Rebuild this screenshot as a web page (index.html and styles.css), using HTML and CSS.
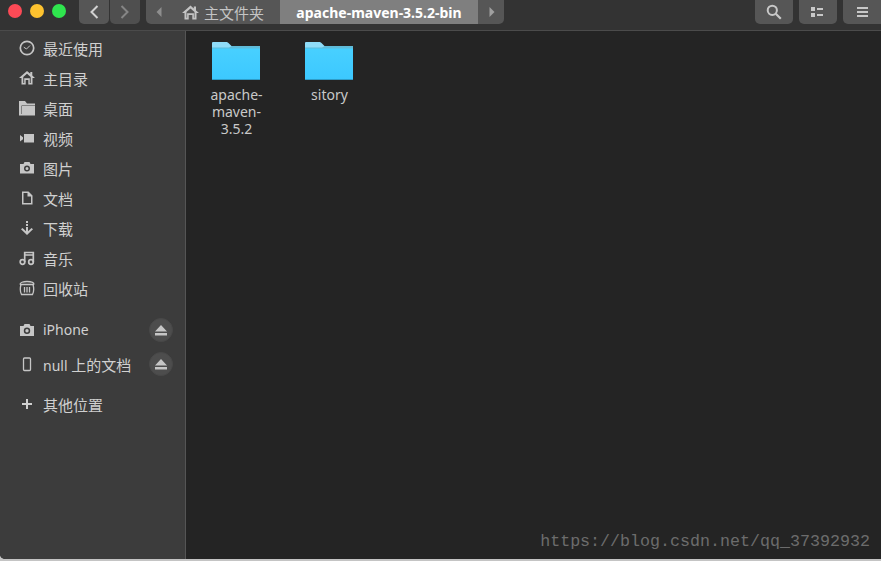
FILE: index.html
```html
<!DOCTYPE html>
<html lang="zh">
<head>
<meta charset="utf-8">
<title>apache-maven-3.5.2-bin</title>
<link rel="stylesheet" href="styles.css">
</head>
<body>
<div class="window">
  <header class="titlebar">
    <div class="lights">
      <span class="light red"></span>
      <span class="light yellow"></span>
      <span class="light green"></span>
    </div>
    <div class="nav">
      <button class="btn back"><svg width="12" height="16" viewBox="0 0 12 16"><path d="M9.500 2 3.500 8l6 6" fill="none" stroke="#d2d2d2" stroke-width="2"/></svg></button>
      <button class="btn forward"><svg width="12" height="16" viewBox="0 0 12 16"><path d="M2.500 2l6 6-6 6" fill="none" stroke="#858585" stroke-width="2"/></svg></button>
    </div>
    <div class="pathbar">
      <div class="crumb-arrow left"><svg width="6" height="10" viewBox="0 0 6 10"><path d="M5.500 0v10L.5 5z" fill="#8e8e8e"/></svg></div>
      <div class="crumb home">
        <svg width="17" height="15" viewBox="0 0 17 15"><path fill-rule="evenodd" d="M8.500.5 0 8h2.500v6.500h4.200V10h3.600v4.500h4.200V8H17L14 5.400V1.500h-2.200v2zM8.500 3.400l4 3.600v5.700h-.6V8.300H5.100v4.400h-.6V7z" fill="#c4c4c4"/></svg>
        <span>主文件夹</span>
      </div>
      <div class="crumb active">apache-maven-3.5.2-bin</div>
      <div class="crumb-arrow right"><svg width="6" height="10" viewBox="0 0 6 10"><path d="M.5 0v10l5-5z" fill="#a0a0a0"/></svg></div>
    </div>
    <div class="tools">
      <button class="btn tool"><svg width="16" height="16" viewBox="0 0 16 16"><circle cx="6.300" cy="6.300" r="4.600" fill="none" stroke="#c8c8c8" stroke-width="2"/><path d="m9.800 9.800 5 5" stroke="#c8c8c8" stroke-width="2.200" fill="none"/></svg></button>
      <button class="btn tool"><svg width="14" height="10" viewBox="0 0 14 10"><path d="M0 0h4v4H0zM0 6h4v4H0zM6 1h6v2H6zM6 7h6v2H6z" fill="#c8c8c8"/></svg></button>
      <button class="btn tool last"><svg width="11" height="10" viewBox="0 0 11 10"><path d="M0 0h11v2H0zM0 4h11v2H0zM0 8h11v2H0z" fill="#c8c8c8"/></svg></button>
    </div>
  </header>
  <div class="body">
    <nav class="sidebar">
      <div class="row"><svg class="icon" width="16" height="16" viewBox="0 0 16 16"><circle cx="8" cy="8" r="6.700" fill="none" stroke="#c6c6c6" stroke-width="1.700"/><path d="M4.800 7.200 7.500 9 11 5.500" fill="none" stroke="#c6c6c6"/></svg><span>最近使用</span></div>
      <div class="row"><svg class="icon" width="16" height="16" viewBox="0 0 16 16"><path fill-rule="evenodd" d="M8 1 0 8h2.500v6.500h4.200V10h2.600v4.500h4.200V8H16l-2.700-2.400V2h-2v1.800zM8 3.800l3.700 3.300v5.800h-.9V8.300H5.200v4.600h-.9V7.100z" fill="#c6c6c6"/></svg><span>主目录</span></div>
      <div class="row"><svg class="icon" width="16" height="16" viewBox="0 0 16 16"><path d="M0 1h6l2 2.500h8V15.500H0zM2.500 5.500v8.500H3V6h13V5.500z" fill="#c6c6c6"/></svg><span>桌面</span></div>
      <div class="row"><svg class="icon" width="16" height="16" viewBox="0 0 16 16"><path d="M5 4h10v8.500H5zM1 5l3 2.200v2.100L1 11.500z" fill="#c6c6c6"/></svg><span>视频</span></div>
      <div class="row"><svg class="icon" width="16" height="16" viewBox="0 0 16 16"><path fill-rule="evenodd" d="M1 4h3.500l1-2h5l1 2H15v9.500H1zM8 5.500a3 3 0 1 0 0 6 3 3 0 0 0 0-6zM8 7a1.500 1.500 0 1 1 0 3 1.500 1.500 0 0 1 0-3z" fill="#c6c6c6"/></svg><span>图片</span></div>
      <div class="row"><svg class="icon" width="16" height="16" viewBox="0 0 16 16"><path d="M3 1.500h6.500l4 4V14.500H3zM4.500 3v10h7.500V6.500H8.500V3z" fill="#c6c6c6"/></svg><span>文档</span></div>
      <div class="row"><svg class="icon" width="16" height="16" viewBox="0 0 16 16"><path d="M7 1h2v2H7zM7 4h2v2H7zM7 7h2v4.200l3.500-3.200L14 9.300 8 15 2 9.300 3.500 8 7 11.200z" fill="#c6c6c6"/></svg><span>下载</span></div>
      <div class="row"><svg class="icon" width="16" height="16" viewBox="0 0 16 16"><g fill="none" stroke="#c6c6c6" stroke-width="1.700"><circle cx="3.500" cy="12" r="2.300"/><circle cx="12" cy="12" r="2.300"/><path d="M5.700 12V2.500H14.300V12M5.700 5H14.300"/></g></svg><span>音乐</span></div>
      <div class="row"><svg class="icon" width="16" height="16" viewBox="0 0 16 16"><g fill="none" stroke="#c6c6c6" stroke-width="1.300"><path d="M1 4.500C1 2.500 4 1.500 8 1.500s7 1 7 3"/><path d="M1 4.500h14M2 4.500c-1 3.500-1 7 .5 10h11c1.500-3 1.500-6.500.5-10M5.500 7v5.500M8 7v5.500M10.500 7v5.500"/></g></svg><span>回收站</span></div>
      <div class="row tall device"><svg class="icon" width="16" height="16" viewBox="0 0 16 16"><path fill-rule="evenodd" d="M1 4h3.500l1-2h5l1 2H15v10H1zM8 5.500a3.200 3.200 0 1 0 0 6.400 3.200 3.200 0 0 0 0-6.400zM8 7a1.700 1.700 0 1 1 0 3.400A1.700 1.700 0 0 1 8 7z" fill="#c6c6c6"/></svg><span class="label latin raised">iPhone</span>
        <span class="eject"><svg width="12" height="11" viewBox="0 0 12 11"><path d="M6 0l6 6.500H0zM0 8h12v2.500H0z" fill="#c6c6c6"/></svg></span></div>
      <div class="row tall"><svg class="icon" width="16" height="16" viewBox="0 0 16 16"><rect x="4.500" y="2" width="7" height="12.500" rx="1" fill="none" stroke="#c6c6c6" stroke-width="1.300"/></svg><span class="label"><span class="latin">null </span>上的文档</span>
        <span class="eject"><svg width="12" height="11" viewBox="0 0 12 11"><path d="M6 0l6 6.500H0zM0 8h12v2.500H0z" fill="#c6c6c6"/></svg></span></div>
      <div class="row other"><svg class="icon" width="16" height="16" viewBox="0 0 16 16"><path d="M7 3h2v4h4v2H9v4H7V9H3V7h4z" fill="#d0d0d0"/></svg><span>其他位置</span></div>
    </nav>
    <main class="files">
      <div class="file">
        <svg class="folder" width="48" height="38" viewBox="0 0 48 38"><use href="#folder-shape"/></svg>
        <div class="name">apache-<br>maven-<br>3.5.2</div>
      </div>
      <div class="file">
        <svg class="folder" width="48" height="38" viewBox="0 0 48 38"><use href="#folder-shape"/></svg>
        <div class="name">sitory</div>
      </div>
      <div class="watermark">https://blog.csdn.net/qq_37392932</div>
    </main>
  </div>
</div>
<svg class="defs" width="0" height="0">
  <defs>
    <linearGradient id="folder-grad" x1="0" y1="0" x2="0" y2="1">
      <stop offset="0" stop-color="#48d0ff"/>
      <stop offset="1" stop-color="#3cc8ff"/>
    </linearGradient>
    <g id="folder-shape">
      <path d="M1 0h14l1.500 1 3 3H47a1 1 0 0 1 1 1v6H0V1a1 1 0 0 1 1-1z" fill="#8fdcf8"/>
      <path d="M0 6h48v31a1 1 0 0 1-1 1H1a1 1 0 0 1-1-1z" fill="url(#folder-grad)"/>
      <path d="M0 5.500h17L20 4h27a1 1 0 0 1 1 1v1.500H0z" fill="#5fbbd9"/>
      <path d="M0 37h48v.1a1 1 0 0 1-1 .9H1a1 1 0 0 1-1-.9z" fill="#2e9cc8"/>
    </g>
  </defs>
</svg>
</body>
</html>
```
FILE: styles.css
```css
* { box-sizing: border-box; }
html, body { margin: 0; padding: 0; }
body {
  width: 881px;
  height: 561px;
  overflow: hidden;
  background: #c4c4c4;
  font-family: "Noto Sans", "Noto Sans CJK SC", sans-serif;
  font-size: 14px;
  color: #d4d4d4;
}
.window {
  width: 881px;
  height: 559px;
  display: flex;
  flex-direction: column;
  border-radius: 0 0 0 5px;
  overflow: hidden;
  background: #242424;
}
.titlebar {
  height: 31px;
  flex: none;
  display: flex;
  align-items: flex-start;
  background: #333333;
  border-bottom: 1px solid #4b4b4b;
}
.lights {
  display: flex;
  gap: 8px;
  padding: 4px 0 0 8px;
  width: 79px;
}
.light { width: 14px; height: 14px; border-radius: 50%; }
.red { background: #fc4a56; }
.yellow { background: #fdc22f; }
.green { background: #2fe54e; }
.btn {
  border: 0;
  padding: 0;
  height: 24px;
  background: #565656;
  display: flex;
  align-items: center;
  justify-content: center;
  border-radius: 0 0 5px 5px;
}
.nav { display: flex; gap: 1px; }
.back { width: 30px; }
.forward { width: 30px; background: #4f4f4f; }
.pathbar {
  display: flex;
  height: 24px;
  margin-left: 6px;
  border-radius: 0 0 5px 5px;
  overflow: hidden;
  background: #565656;
  width: 358px;
}
.crumb-arrow {
  width: 26px;
  display: flex;
  align-items: center;
  justify-content: center;
  flex: none;
}
.crumb-arrow.left { width: 25px; }
.crumb-arrow.right { padding-left: 1px; }
.crumb {
  display: flex;
  align-items: center;
}
.home {
  width: 109px;
  gap: 5px;
  padding-left: 11px;
  font-size: 15px;
  color: #c4c4c4;
}
.active {
  width: 198px;
  justify-content: center;
  background: #7f7f7f;
  color: #ffffff;
  font-weight: 700;
  font-size: 14px;
}
.tools { display: flex; margin-left: auto; gap: 6px; }
.tool { width: 38px; }
.tool.last { border-radius: 0 0 0 5px; }
.body { flex: 1; display: flex; min-height: 0; }
.sidebar {
  width: 186px;
  flex: none;
  padding-top: 2px;
  background: #3c3c3c;
  border-right: 1px solid #555555;
}
.row {
  height: 30px;
  display: flex;
  align-items: center;
  padding-left: 19px;
  padding-right: 12px;
  gap: 8px;
  font-size: 15px;
  color: #d0d0d0;
}
.latin { font-size: 14px; }
.raised { margin-bottom: 2px; }
.tall { height: 34px; }
.device { margin-top: 10px; }
.other { margin-top: 8px; }
.icon { flex: none; }
.label { flex: 1; }
.eject {
  width: 24px;
  height: 24px;
  border-radius: 50%;
  background: #4d4d4d;
  border: 1px solid #484848;
  display: flex;
  align-items: center;
  justify-content: center;
}
.files {
  position: relative;
  flex: 1;
  display: flex;
  align-items: flex-start;
  padding: 11px 0 0 4px;
  gap: 1px;
  background: #242424;
}
.file {
  width: 92px;
  display: flex;
  flex-direction: column;
  align-items: center;
}
.folder { display: block; }
.name {
  margin-top: 6px;
  padding-left: 1px;
  text-align: center;
  font-size: 14px;
  line-height: 17px;
  color: #c9c9c9;
}
.watermark {
  position: absolute;
  right: 11px;
  bottom: 7px;
  font-family: "Liberation Mono", monospace;
  font-size: 16.67px;
  line-height: 20px;
  color: #6c6c6c;
}
.defs { position: absolute; }
```
